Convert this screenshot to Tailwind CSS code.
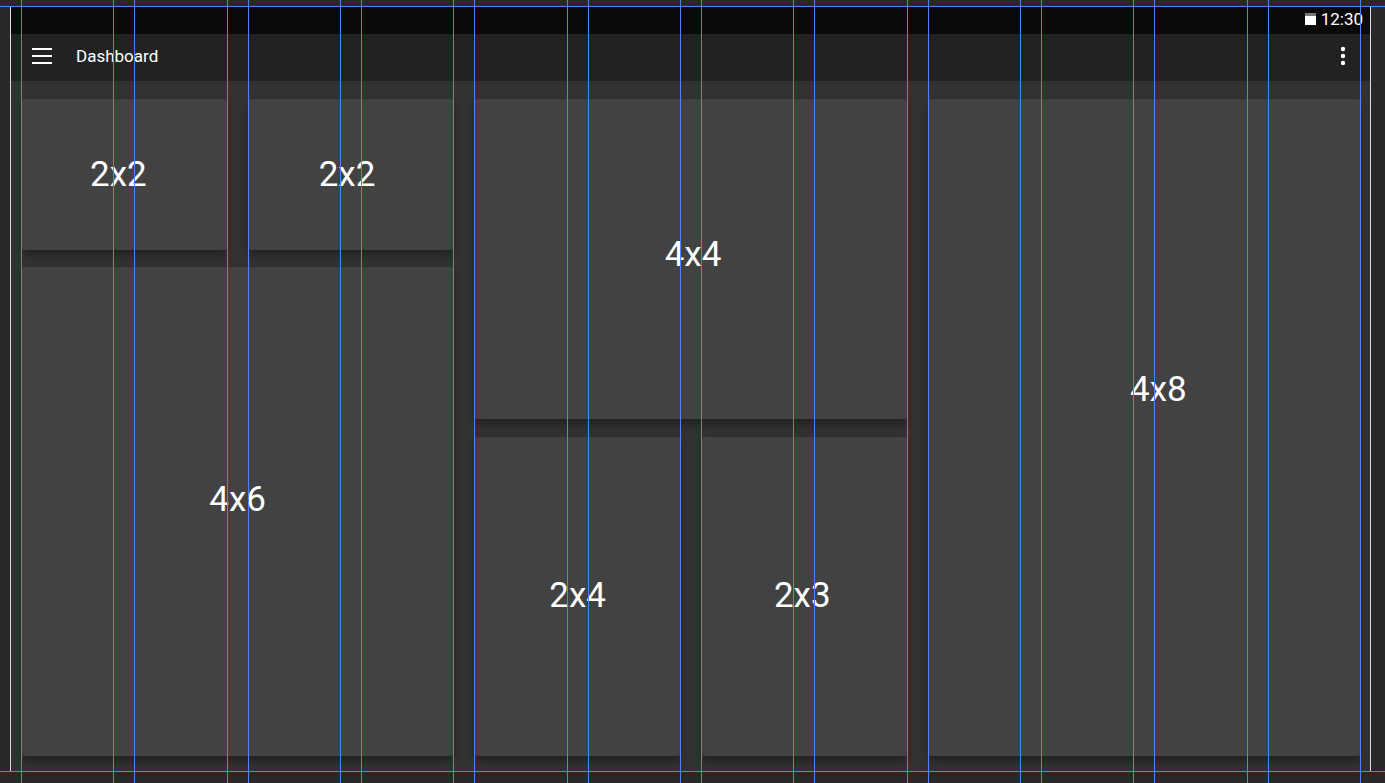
<!DOCTYPE html>
<html lang="en">
<head>
  <meta charset="UTF-8" />
  <meta name="viewport" content="width=device-width, initial-scale=1.0" />
  <title>Dashboard</title>
  <script src="https://cdn.jsdelivr.net/npm/@tailwindcss/browser@4"></script>
</head>
<body class="relative h-screen overflow-hidden bg-[#282828] pt-[6px] pr-[14px] pb-[11px] pl-[10px] font-['Roboto',sans-serif] text-white">
  <div class="flex h-full flex-col border-x border-[#dddddd] bg-[#323232]">
    <!-- Status bar -->
    <div class="flex h-7 shrink-0 items-center justify-end gap-[5px] bg-[#0a0a0a] pr-[7px] pb-[2px]">
      <svg class="h-3 w-[11px]" viewBox="0 0 11 12" aria-hidden="true">
        <rect width="11" height="3" fill="#777777" />
        <rect y="3" width="11" height="9" fill="#ffffff" />
      </svg>
      <span class="text-[17px] leading-5">12:30</span>
    </div>

    <!-- Toolbar -->
    <header class="flex h-[47px] shrink-0 items-center bg-[#222222] pr-[15px] pb-[3px] pl-[21px]">
      <button type="button" aria-label="Menu">
        <svg class="block h-5 w-5" viewBox="0 0 20 20" fill="#ffffff">
          <path d="M0 2h20v2H0zM0 9h20v2H0zM0 16h20v2H0z" />
        </svg>
      </button>
      <h1 class="ml-6 text-[17px] leading-6">Dashboard</h1>
      <button type="button" aria-label="More options" class="ml-auto">
        <svg class="block h-5 w-6" viewBox="0 0 24 20" fill="#ffffff">
          <circle cx="12" cy="3" r="2.2" />
          <circle cx="12" cy="10" r="2.2" />
          <circle cx="12" cy="17" r="2.2" />
        </svg>
      </button>
    </header>

    <!-- Cards -->
    <main class="grid min-h-0 flex-1 grid-cols-3 gap-[22px] pt-[18px] pr-[10px] pb-4 pl-[11px] text-[35px] leading-10">
      <div class="grid grid-rows-[151fr_489fr] gap-[17px]">
        <div class="grid grid-cols-2 gap-[22px]">
          <section class="flex items-center justify-center rounded-xs bg-[#424242] pr-3 shadow-[0_5px_8px_rgba(0,0,0,0.35)]">2x2</section>
          <section class="flex items-center justify-center rounded-xs bg-[#424242] pr-2 shadow-[0_5px_8px_rgba(0,0,0,0.35)]">2x2</section>
        </div>
        <section class="flex items-center justify-center rounded-xs bg-[#424242] pb-6 shadow-[0_5px_8px_rgba(0,0,0,0.35)]">4x6</section>
      </div>
      <div class="grid grid-rows-2 gap-[18px]">
        <section class="flex items-center justify-center rounded-xs bg-[#424242] pb-2 pl-1 shadow-[0_5px_8px_rgba(0,0,0,0.35)]">4x4</section>
        <div class="grid grid-cols-2 gap-[22px]">
          <section class="flex items-center justify-center rounded-xs bg-[#424242] shadow-[0_5px_8px_rgba(0,0,0,0.35)]">2x4</section>
          <section class="flex items-center justify-center rounded-xs bg-[#424242] pr-1 shadow-[0_5px_8px_rgba(0,0,0,0.35)]">2x3</section>
        </div>
      </div>
      <section class="flex items-center justify-center rounded-xs bg-[#424242] pb-19 pl-7 shadow-[0_5px_8px_rgba(0,0,0,0.35)]">4x8</section>
    </main>
  </div>

  <!-- Layout guides -->
  <div class="pointer-events-none absolute inset-0 pr-6 pl-[21px]" aria-hidden="true">
    <div class="grid h-full grid-cols-12 gap-5">
      <div class="border-x border-[#4b86ff]"></div>
      <div class="border-x border-[#4b86ff]"></div>
      <div class="border-x border-[#4b86ff]"></div>
      <div class="border-x border-[#4b86ff]"></div>
      <div class="border-x border-[#4b86ff]"></div>
      <div class="border-x border-[#4b86ff]"></div>
      <div class="border-x border-[#4b86ff]"></div>
      <div class="border-x border-[#4b86ff]"></div>
      <div class="border-x border-[#4b86ff]"></div>
      <div class="border-x border-[#4b86ff]"></div>
      <div class="border-x border-[#4b86ff]"></div>
      <div class="border-x border-[#4b86ff]"></div>
    </div>
  </div>
  <div class="pointer-events-none absolute inset-x-0 top-[6px] bottom-[11px] border-y border-[#4b86ff]" aria-hidden="true"></div>
</body>
</html>
